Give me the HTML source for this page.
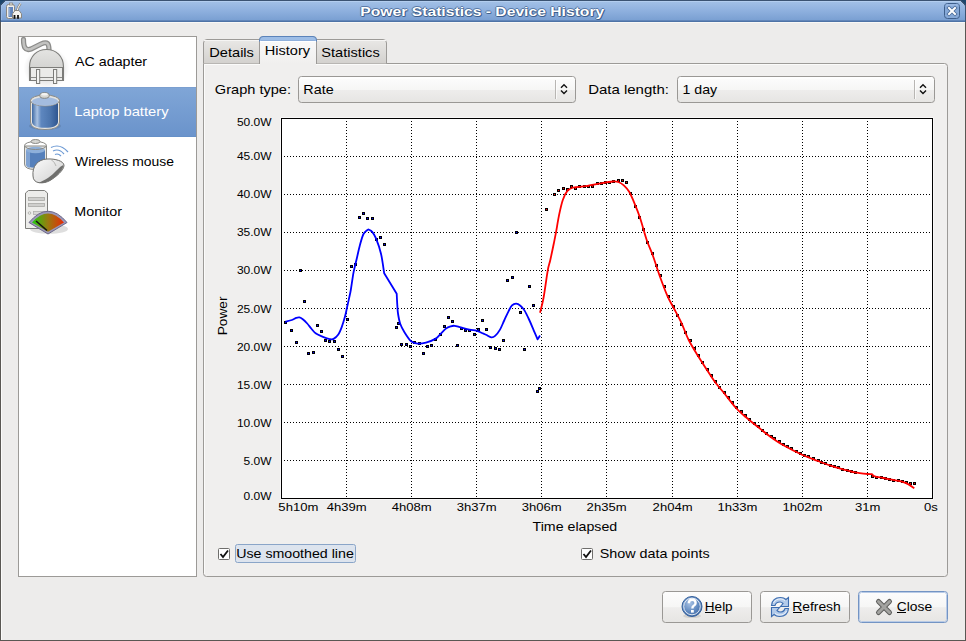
<!DOCTYPE html>
<html><head><meta charset="utf-8"><style>
html,body{margin:0;padding:0;background:#edeceb;overflow:hidden;}
svg{display:block;}
text{font-family:"Liberation Sans", sans-serif;}
</style></head><body>
<svg width="966" height="641" viewBox="0 0 966 641" shape-rendering="auto">
<defs>
<linearGradient id="gTitle" x1="0" y1="0" x2="0" y2="1">
 <stop offset="0" stop-color="#a3c1e7"/><stop offset="0.5" stop-color="#8eb0de"/><stop offset="1" stop-color="#789ed1"/>
</linearGradient>
<linearGradient id="gSel" x1="0" y1="0" x2="0" y2="1">
 <stop offset="0" stop-color="#80a6d7"/><stop offset="1" stop-color="#6a93cb"/>
</linearGradient>
<linearGradient id="gTabInactive" x1="0" y1="0" x2="0" y2="1">
 <stop offset="0" stop-color="#e9e8e6"/><stop offset="1" stop-color="#d3d1ce"/>
</linearGradient>
<linearGradient id="gTabActive" x1="0" y1="0" x2="0" y2="1">
 <stop offset="0" stop-color="#fbfbfb"/><stop offset="1" stop-color="#f0efee"/>
</linearGradient>
<linearGradient id="gBtn" x1="0" y1="0" x2="0" y2="1">
 <stop offset="0" stop-color="#fdfdfd"/><stop offset="0.5" stop-color="#f6f6f5"/><stop offset="0.52" stop-color="#eeedec"/><stop offset="1" stop-color="#e6e5e3"/>
</linearGradient>
<linearGradient id="gBattBody" x1="0" y1="0" x2="1" y2="0">
 <stop offset="0" stop-color="#3f6aa4"/><stop offset="0.2" stop-color="#a9c2e2"/><stop offset="0.35" stop-color="#5e87bf"/><stop offset="0.7" stop-color="#4c75ad"/><stop offset="1" stop-color="#2f5690"/>
</linearGradient>
<linearGradient id="gPlug" x1="0" y1="0" x2="0" y2="1">
 <stop offset="0" stop-color="#e4e4e2"/><stop offset="1" stop-color="#c9c9c6"/>
</linearGradient>
<linearGradient id="gGauge" x1="0" y1="0" x2="1" y2="0">
 <stop offset="0" stop-color="#22cc10"/><stop offset="0.5" stop-color="#9a7a10"/><stop offset="1" stop-color="#e82a08"/>
</linearGradient>
<radialGradient id="gHelp" cx="0.4" cy="0.35" r="0.7">
 <stop offset="0" stop-color="#a6c0e2"/><stop offset="0.6" stop-color="#5f88bf"/><stop offset="1" stop-color="#3d67a3"/>
</radialGradient>
<linearGradient id="gMouse" x1="0" y1="0" x2="1" y2="1">
 <stop offset="0" stop-color="#fafafa"/><stop offset="1" stop-color="#cfcfcf"/>
</linearGradient>
</defs>

<rect x="0" y="0" width="966" height="641" fill="#1c466c"/>
<rect x="0" y="12" width="966" height="629" fill="#edeceb"/>
<rect x="0" y="5" width="1" height="636" fill="#5a5753"/>
<rect x="965" y="5" width="1" height="636" fill="#5a5753"/>
<rect x="0" y="640" width="966" height="1" fill="#5a5753"/>
<rect x="1" y="22" width="1" height="618" fill="#fbfbfa"/>
<rect x="1" y="22" width="964" height="1" fill="#f9f8f6"/>
<path d="M0,5 L5,0 L961,0 L966,5 L966,22 L0,22 Z" fill="#3b5372"/>
<path d="M1,6 L6,1 L960,1 L965,6 L965,21 L1,21 Z" fill="url(#gTitle)"/>
<rect x="5" y="1" width="956" height="1" fill="#b6d0f0" opacity="0.85"/>
<path d="M1.5,5.5 L5.5,1.5 M964.5,5.5 L960.5,1.5" stroke="#b8d2f2" stroke-width="1" opacity="0.8"/>
<rect x="1" y="5" width="1" height="15" fill="#a9c6ec" opacity="0.6"/>
<rect x="1" y="20" width="964" height="1" fill="#6286b9"/>
<rect x="1" y="21" width="964" height="1" fill="#4e73a6"/>
<g transform="translate(1,1)" opacity="0.55">
<text x="360.35" y="16.00" font-size="13" font-weight="bold" fill="#2c4d7a" textLength="243.93" lengthAdjust="spacingAndGlyphs" >Power Statistics - Device History</text>
</g>
<g transform="translate(-1,0)" opacity="0.55">
<text x="360.35" y="16.00" font-size="13" font-weight="bold" fill="#2c4d7a" textLength="243.93" lengthAdjust="spacingAndGlyphs" >Power Statistics - Device History</text>
</g>
<g transform="translate(1,0)" opacity="0.55">
<text x="360.35" y="16.00" font-size="13" font-weight="bold" fill="#2c4d7a" textLength="243.93" lengthAdjust="spacingAndGlyphs" >Power Statistics - Device History</text>
</g>
<g transform="translate(0,1)" opacity="0.55">
<text x="360.35" y="16.00" font-size="13" font-weight="bold" fill="#2c4d7a" textLength="243.93" lengthAdjust="spacingAndGlyphs" >Power Statistics - Device History</text>
</g>
<g transform="translate(0,-1)" opacity="0.55">
<text x="360.35" y="16.00" font-size="13" font-weight="bold" fill="#2c4d7a" textLength="243.93" lengthAdjust="spacingAndGlyphs" >Power Statistics - Device History</text>
</g>
<text x="360.35" y="16.00" font-size="13" font-weight="bold" fill="#ffffff" textLength="243.93" lengthAdjust="spacingAndGlyphs" >Power Statistics - Device History</text>
<g>
<rect x="6.5" y="4.5" width="8" height="14" rx="2" fill="#f0efeb" stroke="#8a8781" stroke-width="1"/>
<rect x="8.5" y="7" width="4.5" height="10" fill="#6184bb"/>
<rect x="9" y="8" width="1.2" height="8" fill="#8eaad2"/>
<rect x="9.5" y="3" width="3" height="2" fill="#e0dfda" stroke="#8a8781" stroke-width="0.8"/>
<path d="M17,11 L18.3,7.2 L20.5,3.5" fill="none" stroke="#8a8781" stroke-width="2.4"/>
<path d="M17,11 L18.3,7.2 L20.5,3.5" fill="none" stroke="#f4f3ef" stroke-width="1"/>
<path d="M12.5,18 L12.5,13.8 L15,10.5 L19,10.5 L21.5,13.8 L21.5,18 Z" fill="#f4f3ef" stroke="#8a8781" stroke-width="1"/>
<rect x="13.6" y="15" width="1.8" height="3.8" fill="#111"/><rect x="17.1" y="15" width="1.8" height="3.8" fill="#111"/>
</g>
<g>
<rect x="944.5" y="3.5" width="15" height="15" rx="3" fill="#86a9d8" stroke="#3e5f8c" stroke-width="1"/>
<rect x="945.5" y="4.5" width="13" height="1" fill="#a9c6ec"/>
<path d="M949,8 L955,14 M955,8 L949,14" stroke="#3e5f8c" stroke-width="3.6" stroke-linecap="square" opacity="0.85"/>
<path d="M949,8 L955,14 M955,8 L949,14" stroke="#ffffff" stroke-width="2" stroke-linecap="square"/>
</g>
<rect x="18.5" y="36.5" width="178" height="540" fill="#ffffff" stroke="#9c9a97" stroke-width="1"/>
<rect x="19" y="87" width="177" height="50" fill="url(#gSel)"/>
<rect x="19" y="87" width="177" height="1" fill="#7b9fd0"/>
<rect x="19" y="136" width="177" height="1" fill="#6590c8"/>
<g>
<defs><radialGradient id="gShadow" cx="0.5" cy="0.5" r="0.5"><stop offset="0.6" stop-color="#000" stop-opacity="0.10"/><stop offset="1" stop-color="#000" stop-opacity="0"/></radialGradient></defs>
<ellipse cx="46.5" cy="68" rx="23" ry="21" fill="url(#gShadow)"/>
<clipPath id="clipList"><rect x="19" y="37" width="177" height="539"/></clipPath>
<g clip-path="url(#clipList)">
<path d="M23.5,39.5 C23.5,47 25,51 31,49 L41,44 C47.5,41 49,43.5 49,50" fill="none" stroke="#8c8c8a" stroke-width="5.2" stroke-linecap="round"/>
<path d="M23.5,39.5 C23.5,47 25,51 31,49 L41,44 C47.5,41 49,43.5 49,50" fill="none" stroke="#c2c2c0" stroke-width="2.6" stroke-linecap="round"/>
</g>
<path d="M29.5,80.5 L29.5,67 C29.5,56 37,49.5 46.5,49.5 C56,49.5 63.5,56 63.5,67 L63.5,80.5 Z" fill="url(#gPlug)" stroke="#7c7c79" stroke-width="1.1"/>
<rect x="30.5" y="67.5" width="32" height="13" fill="#ebebe9" stroke="#7c7c79" stroke-width="1"/>
<path d="M31,77.5 L62,77.5" stroke="#8a8a87" stroke-width="1"/>
<rect x="36.5" y="69.5" width="3.2" height="14" fill="#f3f3f1" stroke="#7c7c79" stroke-width="1"/>
<rect x="53.5" y="69.5" width="3.2" height="14" fill="#f3f3f1" stroke="#7c7c79" stroke-width="1"/>
</g>
<g>
<ellipse cx="45" cy="126" rx="16" ry="4" fill="#000" opacity="0.10"/>
<path d="M30.5,99.5 L30.5,122 Q30.5,129.5 45,129.5 Q59.5,129.5 59.5,122 L59.5,99.5 Z" fill="#e6e6e3" stroke="#8a8a86" stroke-width="1"/>
<path d="M32,102 L32,121.5 Q32,127.8 45,127.8 Q58,127.8 58,121.5 L58,102 Z" fill="url(#gBattBody)"/>
<ellipse cx="45" cy="100.5" rx="14.5" ry="5.5" fill="#e3e3e0" stroke="#8a8a86" stroke-width="1"/>
<ellipse cx="45" cy="101.5" rx="13" ry="4.2" fill="#a3bcdf"/>
<ellipse cx="44.5" cy="95.5" rx="4.8" ry="2.8" fill="#d8d8d4" stroke="#85857f" stroke-width="1"/>
<ellipse cx="44.5" cy="94.2" rx="3.3" ry="1.2" fill="#f4f4f2"/>
</g>
<g>
<path d="M24.5,146 L24.5,164 Q24.5,169.5 35.5,169.5 Q46.5,169.5 46.5,164 L46.5,146 Z" fill="#e4e4e1" stroke="#8a8a86" stroke-width="1"/>
<path d="M26,150 L26,163.5 Q26,167.8 35.5,167.8 Q45,167.8 45,163.5 L45,150 Z" fill="#5580bb"/>
<path d="M26,150 L26,163.5 Q26,167.8 30,167.8 L30,150 Z" fill="#7fa2d2"/>
<ellipse cx="35.5" cy="150" rx="9.5" ry="3.2" fill="#8eb0da"/>
<ellipse cx="35.5" cy="145.5" rx="11" ry="4" fill="none" stroke="#8a8a86" stroke-width="1"/>
<ellipse cx="35.5" cy="141.5" rx="4.5" ry="2" fill="#d8d8d4" stroke="#8a8a86" stroke-width="1"/>
<path d="M33,176 C32,166 38,159.5 47,159 C55,158.5 64,161 64,165.5 C64,170 56,177 50,180.5 C44,184 33,184.5 33,176 Z" fill="url(#gMouse)" stroke="#6e6e6b" stroke-width="1"/>
<path d="M63.5,165 C63.5,170 56,177 50,180.5 C46,182.7 41,183.5 38.5,182.8 C45,180.5 52,175.5 56.5,170.5 C59.5,167.5 61.5,165.5 63.5,165 Z" fill="#6f6f6d"/>
<path d="M51,159.5 Q55,162 56,166" fill="none" stroke="#a8a8a6" stroke-width="0.8"/>
<path d="M51,147.5 Q60,143 68,152" fill="none" stroke="#6d9ad4" stroke-width="1.2"/>
<path d="M53,151 Q59,148 64,154" fill="none" stroke="#6d9ad4" stroke-width="1.2"/>
<path d="M55,154.5 Q58,153 61,156" fill="none" stroke="#6d9ad4" stroke-width="1.2"/>
</g>
<g>
<ellipse cx="49" cy="229" rx="19" ry="5" fill="#000" opacity="0.13"/>
<path d="M25.5,228.5 L25.5,193 L28.5,190.5 L44.5,190.5 L47.5,193 L47.5,228.5 Z" fill="#ececea" stroke="#7d7d7a" stroke-width="1"/>
<rect x="28.5" y="197.5" width="16" height="3" fill="#cfcfcd" stroke="#a9a9a6" stroke-width="0.8"/>
<rect x="28.5" y="203.5" width="16" height="3" fill="#cfcfcd" stroke="#a9a9a6" stroke-width="0.8"/>
<circle cx="29.5" cy="213" r="1.3" fill="none" stroke="#a9a9a6" stroke-width="0.8"/>
<rect x="33.5" y="211.5" width="11" height="3" fill="#d8d8d6" stroke="#b0b0ad" stroke-width="0.8"/>
<path d="M29,222.5 Q48,200 67,222.5 L48,234 Z" fill="#9b97b8" stroke="#6c6888" stroke-width="1"/>
<path d="M32,222.5 Q48,204.5 64,222.5 L48,231.8 Z" fill="url(#gGauge)"/>
<path d="M36,221 L47,230.5" stroke="#111" stroke-width="1.6"/>
</g>
<text x="75.07" y="65.70" font-size="13" fill="#000" textLength="72.06" lengthAdjust="spacingAndGlyphs" >AC adapter</text>
<text x="74.29" y="115.70" font-size="13" fill="#ffffff" textLength="94.24" lengthAdjust="spacingAndGlyphs" >Laptop battery</text>
<text x="75.14" y="165.70" font-size="13" fill="#000" textLength="98.88" lengthAdjust="spacingAndGlyphs" >Wireless mouse</text>
<text x="74.33" y="215.90" font-size="13" fill="#000" textLength="47.71" lengthAdjust="spacingAndGlyphs" >Monitor</text>
<path d="M203.5,63.5 L944.5,63.5 Q947.5,63.5 947.5,66.5 L947.5,573.5 Q947.5,576.5 944.5,576.5 L206.5,576.5 Q203.5,576.5 203.5,573.5 Z" fill="#f0efee" stroke="#9c9a97" stroke-width="1"/>
<rect x="204" y="64" width="741" height="1" fill="#fbfbfa"/>
<rect x="204" y="64" width="1" height="510" fill="#fbfbfa"/>
<path d="M203.5,63.5 L203.5,43 Q203.5,39.5 207,39.5 L259.5,39.5 L259.5,63.5" fill="url(#gTabInactive)" stroke="#9c9a97" stroke-width="1"/>
<path d="M316.5,63.5 L316.5,39.5 L383,39.5 Q386.5,39.5 386.5,43 L386.5,63.5" fill="url(#gTabInactive)" stroke="#9c9a97" stroke-width="1"/>
<rect x="204" y="40" width="55" height="1" fill="#f6f5f4"/>
<rect x="317" y="40" width="69" height="1" fill="#f6f5f4"/>
<path d="M259.5,64 L259.5,40 Q259.5,36.5 263,36.5 L313,36.5 Q316.5,36.5 316.5,40 L316.5,64" fill="url(#gTabActive)" stroke="#9c9a97" stroke-width="1"/>
<path d="M259.5,41.5 L259.5,40 Q259.5,36.5 263,36.5 L313,36.5 Q316.5,36.5 316.5,40 L316.5,41.5" fill="#9dbde6" stroke="#5b83ba" stroke-width="1"/>
<rect x="261" y="40" width="54" height="1" fill="#8fb0dc"/>
<rect x="260" y="41" width="56" height="1" fill="#ffffff"/>
<rect x="260" y="63" width="56" height="2" fill="#f0efee"/>
<text x="209.30" y="56.90" font-size="13" fill="#000" textLength="44.63" lengthAdjust="spacingAndGlyphs" >Details</text>
<text x="264.81" y="54.80" font-size="13" fill="#000" textLength="45.22" lengthAdjust="spacingAndGlyphs" >History</text>
<text x="321.34" y="57.10" font-size="13" fill="#000" textLength="58.39" lengthAdjust="spacingAndGlyphs" >Statistics</text>
<text x="214.87" y="93.70" font-size="13" fill="#000" textLength="76.16" lengthAdjust="spacingAndGlyphs" >Graph type:</text>
<text x="588.17" y="94.00" font-size="13" fill="#000" textLength="80.80" lengthAdjust="spacingAndGlyphs" >Data length:</text>
<rect x="298.5" y="76.5" width="277" height="26" rx="3" fill="url(#gBtn)" stroke="#9a9895" stroke-width="1"/>
<rect x="300" y="77.5" width="274" height="1" fill="#ffffff"/>
<rect x="555" y="80" width="1" height="19" fill="#b8b6b3"/>
<rect x="556" y="80" width="1" height="19" fill="#ffffff" opacity="0.7"/>
<path d="M561,87.8 L564,84.8 L567,87.8 M561,90.6 L564,93.6 L567,90.6" fill="none" stroke="#111" stroke-width="1.4"/>
<text x="303.32" y="94.00" font-size="13" fill="#000" textLength="30.31" lengthAdjust="spacingAndGlyphs" >Rate</text>
<rect x="677.5" y="76.5" width="257" height="26" rx="3" fill="url(#gBtn)" stroke="#9a9895" stroke-width="1"/>
<rect x="679" y="77.5" width="254" height="1" fill="#ffffff"/>
<rect x="914" y="80" width="1" height="19" fill="#b8b6b3"/>
<rect x="915" y="80" width="1" height="19" fill="#ffffff" opacity="0.7"/>
<path d="M920,87.8 L923,84.8 L926,87.8 M920,90.6 L923,93.6 L926,90.6" fill="none" stroke="#111" stroke-width="1.4"/>
<text x="682.52" y="94.00" font-size="13" fill="#000" textLength="34.61" lengthAdjust="spacingAndGlyphs" >1 day</text>
<rect x="280.5" y="117.5" width="653" height="382" fill="#ffffff"/>
<path d="M346.5,121 L346.5,498 M411.5,121 L411.5,498 M476.5,121 L476.5,498 M541.5,121 L541.5,498 M606.5,121 L606.5,498 M672.5,121 L672.5,498 M737.5,121 L737.5,498 M802.5,121 L802.5,498 M867.5,121 L867.5,498 M284,156.5 L932,156.5 M284,194.5 L932,194.5 M284,232.5 L932,232.5 M284,270.5 L932,270.5 M284,308.5 L932,308.5 M284,346.5 L932,346.5 M284,384.5 L932,384.5 M284,422.5 L932,422.5 M284,460.5 L932,460.5" stroke="#000" stroke-width="1" stroke-dasharray="1 2" fill="none" shape-rendering="crispEdges"/>
<path d="M284,321h3v3h-3z M290,329h3v3h-3z M295,341h3v3h-3z M299,269h3v3h-3z M303,300h3v3h-3z M307,352h3v3h-3z M312,351h3v3h-3z M316,324h3v3h-3z M320,330h3v3h-3z M324,339h3v3h-3z M328,340h3v3h-3z M333,340h3v3h-3z M337,348h3v3h-3z M341,355h3v3h-3z M346,318h3v3h-3z M350,265h3v3h-3z M354,263h3v3h-3z M358,216h3v3h-3z M362,212h3v3h-3z M366,217h3v3h-3z M371,217h3v3h-3z M375,238h3v3h-3z M379,236h3v3h-3z M383,243h3v3h-3z M395,326h3v3h-3z M397,322h3v3h-3z M400,343h3v3h-3z M405,343h3v3h-3z M409,345h3v3h-3z M413,341h3v3h-3z M418,342h3v3h-3z M422,352h3v3h-3z M426,345h3v3h-3z M430,344h3v3h-3z M434,338h3v3h-3z M439,333h3v3h-3z M443,325h3v3h-3z M447,316h3v3h-3z M451,320h3v3h-3z M456,344h3v3h-3z M460,327h3v3h-3z M464,329h3v3h-3z M468,329h3v3h-3z M473,333h3v3h-3z M477,328h3v3h-3z M481,319h3v3h-3z M485,328h3v3h-3z M489,346h3v3h-3z M494,347h3v3h-3z M498,348h3v3h-3z M502,339h3v3h-3z M506,279h3v3h-3z M511,276h3v3h-3z M515,231h3v3h-3z M519,311h3v3h-3z M523,348h3v3h-3z M528,285h3v3h-3z M532,304h3v3h-3z M536,390h3v3h-3z M538,387h3v3h-3z M545,208h3v3h-3z M553,193h3v3h-3z M557,189h3v3h-3z M562,187h3v3h-3z M566,188h3v3h-3z M570,185h3v3h-3z M574,187h3v3h-3z M578,185h3v3h-3z M583,185h3v3h-3z M587,185h3v3h-3z M591,185h3v3h-3z M596,182h3v3h-3z M600,182h3v3h-3z M604,181h3v3h-3z M608,181h3v3h-3z M612,180h3v3h-3z M617,179h3v3h-3z M621,179h3v3h-3z M625,181h3v3h-3z M629,192h3v3h-3z M634,205h3v3h-3z M638,216h3v3h-3z M642,228h3v3h-3z M646,241h3v3h-3z M651,252h3v3h-3z M655,264h3v3h-3z M659,274h3v3h-3z M663,285h3v3h-3z M667,295h3v3h-3z M672,305h3v3h-3z M676,314h3v3h-3z M680,323h3v3h-3z M684,331h3v3h-3z M689,339h3v3h-3z M693,347h3v3h-3z M697,354h3v3h-3z M701,361h3v3h-3z M706,368h3v3h-3z M710,374h3v3h-3z M714,380h3v3h-3z M718,386h3v3h-3z M723,391h3v3h-3z M727,396h3v3h-3z M731,401h3v3h-3z M735,406h3v3h-3z M740,410h3v3h-3z M744,414h3v3h-3z M748,418h3v3h-3z M753,422h3v3h-3z M757,425h3v3h-3z M761,429h3v3h-3z M765,432h3v3h-3z M770,435h3v3h-3z M773,437h3v3h-3z M778,440h3v3h-3z M782,443h3v3h-3z M786,445h3v3h-3z M790,447h3v3h-3z M795,450h3v3h-3z M799,452h3v3h-3z M803,454h3v3h-3z M807,455h3v3h-3z M812,457h3v3h-3z M817,459h3v3h-3z M820,461h3v3h-3z M824,462h3v3h-3z M829,464h3v3h-3z M833,465h3v3h-3z M837,466h3v3h-3z M841,468h3v3h-3z M846,469h3v3h-3z M850,470h3v3h-3z M854,471h3v3h-3z M871,475h3v3h-3z M875,476h3v3h-3z M880,476h3v3h-3z M884,477h3v3h-3z M888,478h3v3h-3z M892,479h3v3h-3z M897,479h3v3h-3z M901,480h3v3h-3z M905,481h3v3h-3z M909,482h3v3h-3z M913,482h3v3h-3z" fill="#000" shape-rendering="crispEdges"/>
<path d="M285,322h1v1h-1z M291,330h1v1h-1z M296,342h1v1h-1z M300,270h1v1h-1z M304,301h1v1h-1z M308,353h1v1h-1z M313,352h1v1h-1z M317,325h1v1h-1z M321,331h1v1h-1z M325,340h1v1h-1z M329,341h1v1h-1z M334,341h1v1h-1z M338,349h1v1h-1z M342,356h1v1h-1z M347,319h1v1h-1z M351,266h1v1h-1z M355,264h1v1h-1z M359,217h1v1h-1z M363,213h1v1h-1z M367,218h1v1h-1z M372,218h1v1h-1z M376,239h1v1h-1z M380,237h1v1h-1z M384,244h1v1h-1z M396,327h1v1h-1z M398,323h1v1h-1z M401,344h1v1h-1z M406,344h1v1h-1z M410,346h1v1h-1z M414,342h1v1h-1z M419,343h1v1h-1z M423,353h1v1h-1z M427,346h1v1h-1z M431,345h1v1h-1z M435,339h1v1h-1z M440,334h1v1h-1z M444,326h1v1h-1z M448,317h1v1h-1z M452,321h1v1h-1z M457,345h1v1h-1z M461,328h1v1h-1z M465,330h1v1h-1z M469,330h1v1h-1z M474,334h1v1h-1z M478,329h1v1h-1z M482,320h1v1h-1z M486,329h1v1h-1z M490,347h1v1h-1z M495,348h1v1h-1z M499,349h1v1h-1z M503,340h1v1h-1z M507,280h1v1h-1z M512,277h1v1h-1z M516,232h1v1h-1z M520,312h1v1h-1z M524,349h1v1h-1z M529,286h1v1h-1z M533,305h1v1h-1z M537,391h1v1h-1z M539,388h1v1h-1z" fill="#0000ff" shape-rendering="crispEdges"/>
<path d="M546,209h1v1h-1z M554,194h1v1h-1z M558,190h1v1h-1z M563,188h1v1h-1z M567,189h1v1h-1z M571,186h1v1h-1z M575,188h1v1h-1z M579,186h1v1h-1z M584,186h1v1h-1z M588,186h1v1h-1z M592,186h1v1h-1z M597,183h1v1h-1z M601,183h1v1h-1z M605,182h1v1h-1z M609,182h1v1h-1z M613,181h1v1h-1z M618,180h1v1h-1z M622,180h1v1h-1z M626,182h1v1h-1z M630,193h1v1h-1z M635,206h1v1h-1z M639,217h1v1h-1z M643,229h1v1h-1z M647,242h1v1h-1z M652,253h1v1h-1z M656,265h1v1h-1z M660,275h1v1h-1z M664,286h1v1h-1z M668,296h1v1h-1z M673,306h1v1h-1z M677,315h1v1h-1z M681,324h1v1h-1z M685,332h1v1h-1z M690,340h1v1h-1z M694,348h1v1h-1z M698,355h1v1h-1z M702,362h1v1h-1z M707,369h1v1h-1z M711,375h1v1h-1z M715,381h1v1h-1z M719,387h1v1h-1z M724,392h1v1h-1z M728,397h1v1h-1z M732,402h1v1h-1z M736,407h1v1h-1z M741,411h1v1h-1z M745,415h1v1h-1z M749,419h1v1h-1z M754,423h1v1h-1z M758,426h1v1h-1z M762,430h1v1h-1z M766,433h1v1h-1z M771,436h1v1h-1z M774,438h1v1h-1z M779,441h1v1h-1z M783,444h1v1h-1z M787,446h1v1h-1z M791,448h1v1h-1z M796,451h1v1h-1z M800,453h1v1h-1z M804,455h1v1h-1z M808,456h1v1h-1z M813,458h1v1h-1z M818,460h1v1h-1z M821,462h1v1h-1z M825,463h1v1h-1z M830,465h1v1h-1z M834,466h1v1h-1z M838,467h1v1h-1z M842,469h1v1h-1z M847,470h1v1h-1z M851,471h1v1h-1z M855,472h1v1h-1z M872,476h1v1h-1z M876,477h1v1h-1z M881,477h1v1h-1z M885,478h1v1h-1z M889,479h1v1h-1z M893,480h1v1h-1z M898,480h1v1h-1z M902,481h1v1h-1z M906,482h1v1h-1z M910,483h1v1h-1z M914,483h1v1h-1z" fill="#ff0000" shape-rendering="crispEdges"/>
<path d="M285.40,321.60 C286.48,321.33 290.08,320.63 291.90,320.00 C293.72,319.37 295.03,318.23 296.30,317.80 C297.57,317.37 298.42,317.17 299.50,317.40 C300.58,317.63 301.52,318.18 302.80,319.20 C304.08,320.22 305.73,321.87 307.20,323.50 C308.67,325.13 310.13,327.32 311.60,329.00 C313.07,330.68 314.12,332.30 316.00,333.60 C317.88,334.90 320.62,335.88 322.90,336.80 C325.18,337.72 327.92,338.75 329.70,339.10 C331.48,339.45 332.17,339.65 333.60,338.90 C335.03,338.15 336.93,336.60 338.30,334.60 C339.67,332.60 340.65,330.03 341.80,326.90 C342.95,323.77 344.35,318.95 345.20,315.80 C346.05,312.65 346.27,310.87 346.90,308.00 C347.53,305.13 348.35,301.60 349.00,298.60 C349.65,295.60 350.03,294.40 350.80,290.00 C351.57,285.60 352.58,277.53 353.60,272.20 C354.62,266.87 355.88,262.37 356.90,258.00 C357.92,253.63 358.60,250.00 359.70,246.00 C360.80,242.00 362.05,236.77 363.50,234.00 C364.95,231.23 367.58,230.17 368.40,229.40 C369.03,229.80 370.93,230.30 372.20,231.80 C373.47,233.30 374.53,234.75 376.00,238.40 C377.47,242.05 379.63,247.88 381.00,253.70 C382.37,259.52 383.67,270.03 384.20,273.30 C386.28,276.70 394.62,290.30 396.70,293.70 C396.80,295.58 397.08,301.70 397.30,305.00 C397.52,308.30 397.52,310.38 398.00,313.50 C398.48,316.62 399.10,320.55 400.20,323.70 C401.30,326.85 402.78,329.48 404.60,332.40 C406.42,335.32 408.92,339.33 411.10,341.20 C413.28,343.07 415.22,343.37 417.70,343.60 C420.18,343.83 423.07,343.38 426.00,342.60 C428.93,341.82 432.92,340.30 435.30,338.90 C437.68,337.50 438.53,335.92 440.30,334.20 C442.07,332.48 444.15,329.92 445.90,328.60 C447.65,327.28 449.35,326.77 450.80,326.30 C452.25,325.83 452.93,325.62 454.60,325.80 C456.27,325.98 458.32,326.77 460.80,327.40 C463.28,328.03 466.82,329.03 469.50,329.60 C472.18,330.17 474.83,330.23 476.90,330.80 C478.97,331.37 480.38,332.33 481.90,333.00 C483.42,333.67 484.43,334.08 486.00,334.80 C487.57,335.52 489.78,337.12 491.30,337.30 C492.82,337.48 493.65,337.18 495.10,335.90 C496.55,334.62 498.48,332.17 500.00,329.60 C501.52,327.03 502.78,323.55 504.20,320.50 C505.62,317.45 507.20,313.82 508.50,311.30 C509.80,308.78 510.72,306.68 512.00,305.40 C513.28,304.12 514.80,303.55 516.20,303.60 C517.60,303.65 519.00,304.53 520.40,305.70 C521.80,306.87 523.08,308.13 524.60,310.60 C526.12,313.07 527.98,317.22 529.50,320.50 C531.02,323.78 532.35,327.15 533.70,330.30 C535.05,333.45 536.95,337.88 537.60,339.40 C538.00,338.75 539.60,336.15 540.00,335.50" fill="none" stroke="#0000ff" stroke-width="1.8" stroke-linejoin="round"/>
<path d="M540.00,312.70 C540.58,310.25 542.20,305.08 543.50,298.00 C544.80,290.92 546.67,276.53 547.80,270.20 C548.93,263.87 549.28,264.53 550.30,260.00 C551.32,255.47 552.95,247.60 553.90,243.00 C554.85,238.40 555.13,237.08 556.00,232.40 C556.87,227.72 557.97,220.30 559.10,214.90 C560.23,209.50 561.45,203.95 562.80,200.00 C564.15,196.05 565.43,193.28 567.20,191.20 C568.97,189.12 570.28,188.33 573.40,187.50 C576.52,186.67 581.15,186.93 585.90,186.20 C590.65,185.47 597.42,183.88 601.90,183.10 C606.38,182.32 610.07,181.68 612.80,181.50 C615.53,181.32 616.47,181.37 618.30,182.00 C620.13,182.63 621.98,183.67 623.80,185.30 C625.62,186.93 627.38,188.72 629.20,191.80 C631.02,194.88 632.88,199.43 634.70,203.80 C636.52,208.17 638.10,211.97 640.10,218.00 C642.10,224.03 644.55,233.67 646.70,240.00 C648.85,246.33 650.78,249.87 653.00,256.00 C655.22,262.13 657.58,270.10 660.00,276.80 C662.42,283.50 665.22,291.00 667.50,296.20 C669.78,301.40 671.42,303.65 673.70,308.00 C675.98,312.35 678.70,316.97 681.20,322.30 C683.70,327.63 685.83,334.30 688.70,340.00 C691.57,345.70 695.35,351.50 698.40,356.50 C701.45,361.50 704.23,365.75 707.00,370.00 C709.77,374.25 712.17,378.17 715.00,382.00 C717.83,385.83 720.50,388.67 724.00,393.00 C727.50,397.33 732.33,403.95 736.00,408.00 C739.67,412.05 742.33,414.13 746.00,417.30 C749.67,420.47 754.10,423.88 758.00,427.00 C761.90,430.12 765.23,433.00 769.40,436.00 C773.57,439.00 777.55,441.88 783.00,445.00 C788.45,448.12 796.27,452.03 802.10,454.70 C807.93,457.37 812.35,458.88 818.00,461.00 C823.65,463.12 831.33,465.88 836.00,467.40 C840.67,468.92 842.92,469.27 846.00,470.10 C849.08,470.93 850.88,471.75 854.50,472.40 C858.12,473.05 864.78,473.72 867.70,474.00 C870.62,474.28 871.28,474.08 872.00,474.10 C872.45,474.47 872.82,475.65 874.70,476.30 C876.58,476.95 879.80,477.33 883.30,478.00 C886.80,478.67 892.60,479.68 895.70,480.30 C898.80,480.92 899.83,481.07 901.90,481.70 C903.97,482.33 906.03,483.00 908.10,484.10 C910.17,485.20 913.27,487.60 914.30,488.30" fill="none" stroke="#ff0000" stroke-width="1.8" stroke-linejoin="round"/>
<rect x="281.5" y="118.5" width="651" height="380" fill="none" stroke="#000" stroke-width="1" shape-rendering="crispEdges"/>
<text x="236.92" y="126.00" font-size="11" fill="#000" textLength="34.62" lengthAdjust="spacingAndGlyphs" >50.0W</text>
<text x="236.92" y="160.00" font-size="11" fill="#000" textLength="34.62" lengthAdjust="spacingAndGlyphs" >45.0W</text>
<text x="236.92" y="198.00" font-size="11" fill="#000" textLength="34.62" lengthAdjust="spacingAndGlyphs" >40.0W</text>
<text x="236.92" y="236.00" font-size="11" fill="#000" textLength="34.62" lengthAdjust="spacingAndGlyphs" >35.0W</text>
<text x="236.92" y="274.00" font-size="11" fill="#000" textLength="34.62" lengthAdjust="spacingAndGlyphs" >30.0W</text>
<text x="236.92" y="313.00" font-size="11" fill="#000" textLength="34.62" lengthAdjust="spacingAndGlyphs" >25.0W</text>
<text x="236.92" y="351.00" font-size="11" fill="#000" textLength="34.62" lengthAdjust="spacingAndGlyphs" >20.0W</text>
<text x="236.92" y="389.00" font-size="11" fill="#000" textLength="34.62" lengthAdjust="spacingAndGlyphs" >15.0W</text>
<text x="236.92" y="427.00" font-size="11" fill="#000" textLength="34.62" lengthAdjust="spacingAndGlyphs" >10.0W</text>
<text x="243.58" y="465.00" font-size="11" fill="#000" textLength="27.96" lengthAdjust="spacingAndGlyphs" >5.0W</text>
<text x="243.58" y="500.00" font-size="11" fill="#000" textLength="27.96" lengthAdjust="spacingAndGlyphs" >0.0W</text>
<text x="278.38" y="510.50" font-size="11" fill="#000" textLength="39.99" lengthAdjust="spacingAndGlyphs" >5h10m</text>
<text x="326.79" y="510.50" font-size="11" fill="#000" textLength="39.99" lengthAdjust="spacingAndGlyphs" >4h39m</text>
<text x="391.79" y="510.50" font-size="11" fill="#000" textLength="39.99" lengthAdjust="spacingAndGlyphs" >4h08m</text>
<text x="456.69" y="510.50" font-size="11" fill="#000" textLength="39.99" lengthAdjust="spacingAndGlyphs" >3h37m</text>
<text x="521.69" y="510.50" font-size="11" fill="#000" textLength="39.99" lengthAdjust="spacingAndGlyphs" >3h06m</text>
<text x="586.61" y="510.50" font-size="11" fill="#000" textLength="39.99" lengthAdjust="spacingAndGlyphs" >2h35m</text>
<text x="652.61" y="510.50" font-size="11" fill="#000" textLength="39.99" lengthAdjust="spacingAndGlyphs" >2h04m</text>
<text x="717.44" y="510.50" font-size="11" fill="#000" textLength="39.99" lengthAdjust="spacingAndGlyphs" >1h33m</text>
<text x="782.44" y="510.50" font-size="11" fill="#000" textLength="39.99" lengthAdjust="spacingAndGlyphs" >1h02m</text>
<text x="854.96" y="510.50" font-size="11" fill="#000" textLength="25.44" lengthAdjust="spacingAndGlyphs" >31m</text>
<text x="924.09" y="510.50" font-size="11" fill="#000" textLength="13.81" lengthAdjust="spacingAndGlyphs" >0s</text>
<text x="532.58" y="530.90" font-size="13" fill="#000" textLength="84.63" lengthAdjust="spacingAndGlyphs" >Time elapsed</text>
<g transform="translate(227,334.2) rotate(-90)">
<text x="-1.12" y="0.00" font-size="13" fill="#000" textLength="38.85" lengthAdjust="spacingAndGlyphs" >Power</text>
</g>
<rect x="218.5" y="548.5" width="11" height="11" rx="1" fill="#ffffff" stroke="#6f6e6c" stroke-width="1"/>
<path d="M220.5,554 L223,557 L228,550.5" fill="none" stroke="#111" stroke-width="1.8" stroke-linejoin="miter"/>
<rect x="235.5" y="544.5" width="120" height="18" rx="2" fill="#dde4ee" stroke="#8aa5c8" stroke-width="1"/>
<text x="236.20" y="558.00" font-size="13" fill="#000" textLength="117.63" lengthAdjust="spacingAndGlyphs" >Use smoothed line</text>
<rect x="581.5" y="548.5" width="11" height="11" rx="1" fill="#ffffff" stroke="#6f6e6c" stroke-width="1"/>
<path d="M583.5,554 L586,557 L591,550.5" fill="none" stroke="#111" stroke-width="1.8" stroke-linejoin="miter"/>
<text x="599.65" y="558.00" font-size="13" fill="#000" textLength="109.97" lengthAdjust="spacingAndGlyphs" >Show data points</text>
<rect x="662.5" y="591.5" width="89" height="31" rx="3" fill="url(#gBtn)" stroke="#9a9895" stroke-width="1"/>
<rect x="760.5" y="591.5" width="89" height="31" rx="3" fill="url(#gBtn)" stroke="#9a9895" stroke-width="1"/>
<rect x="858.5" y="591.5" width="89" height="31" rx="3" fill="url(#gBtn)" stroke="#7394c4" stroke-width="1"/>
<rect x="859.5" y="592.5" width="87" height="29" rx="2" fill="none" stroke="#b9cbe6" stroke-width="1"/>
<g>
<ellipse cx="692" cy="616" rx="9" ry="2" fill="#000" opacity="0.1"/>
<circle cx="692" cy="606.5" r="10" fill="url(#gHelp)" stroke="#34609c" stroke-width="1"/>
<circle cx="692" cy="606.5" r="8.3" fill="none" stroke="#ffffff" stroke-width="0.9" opacity="0.9"/>
<path d="M688.8,603.3 Q688.8,599.8 692.2,599.8 Q695.6,599.8 695.6,603 Q695.6,605 693.5,606 Q692.4,606.6 692.4,608.5" fill="none" stroke="#ffffff" stroke-width="2.4"/>
<rect x="691" y="610" width="2.8" height="2.6" fill="#ffffff"/>
</g>
<text x="704.89" y="610.70" font-size="13" fill="#000" textLength="27.77" lengthAdjust="spacingAndGlyphs" >Help</text>
<rect x="705" y="612" width="10" height="1" fill="#000"/>
<g fill="#b3cbea" stroke="#3d6db0" stroke-width="1.1" stroke-linejoin="miter">
<path d="M771.5,605.5 C772,600 776,597.5 780.5,597.5 C783,597.5 785,598.5 786,599.5 L788.5,597.5 L788.5,606.5 L780.5,606.5 L783,603.5 C782,602.5 781,602 780,602 C777.5,602 775.5,603.5 775,605.5 Z"/>
<path d="M788.5,608.5 C788,614 784,616.5 779.5,616.5 C777,616.5 775,615.5 774,614.5 L771.5,616.5 L771.5,607.5 L779.5,607.5 L777,610.5 C778,611.5 779,612 780,612 C782.5,612 784.5,610.5 785,608.5 Z"/>
</g>
<path d="M773.5,603 C775,600 777.5,599 780.5,599 C782.5,599 784,599.8 785,600.8" fill="none" stroke="#ffffff" stroke-width="0.9" opacity="0.8"/>
<path d="M786.5,611 C785,614 782.5,615 779.5,615 C777.5,615 776,614.2 775,613.2" fill="none" stroke="#ffffff" stroke-width="0.9" opacity="0.8"/>

<text x="792.16" y="610.70" font-size="13" fill="#000" textLength="48.64" lengthAdjust="spacingAndGlyphs" >Refresh</text>
<rect x="793" y="612" width="9" height="1" fill="#000"/>
<g>
<path d="M878.5,601.5 L889.5,612.5 M889.5,601.5 L878.5,612.5" stroke="#5e5e5c" stroke-width="5" stroke-linecap="round"/>
<path d="M878.5,601.5 L889.5,612.5 M889.5,601.5 L878.5,612.5" stroke="#a3a3a0" stroke-width="3" stroke-linecap="round"/>
</g>
<text x="896.80" y="610.70" font-size="13" fill="#000" textLength="35.32" lengthAdjust="spacingAndGlyphs" >Close</text>
<rect x="897" y="612" width="9" height="1" fill="#000"/>
</svg></body></html>
